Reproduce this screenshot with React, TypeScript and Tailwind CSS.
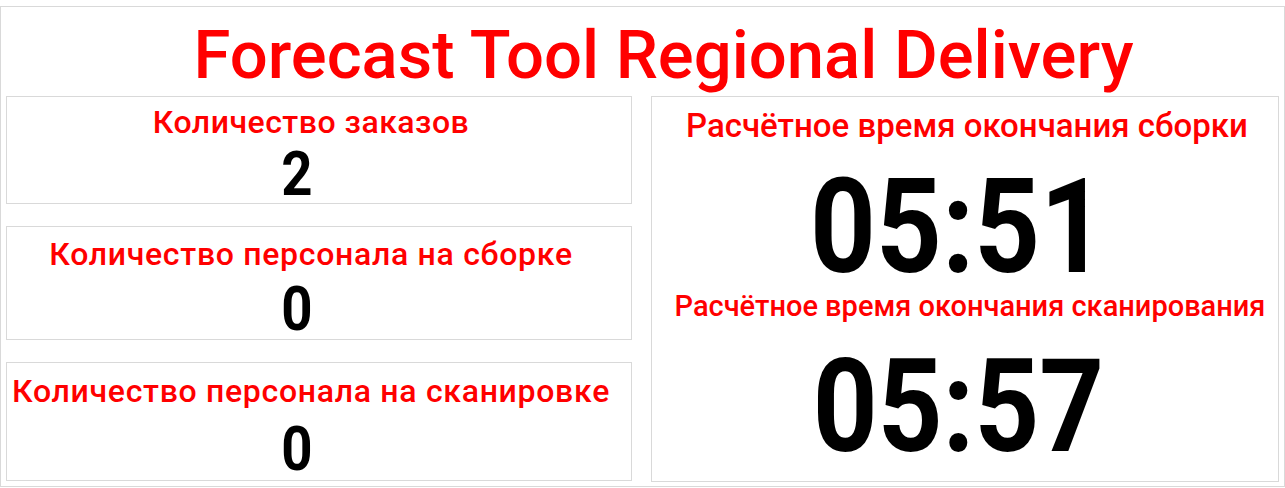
import React from "react";

const F = { fontFamily: "Roboto, 'Liberation Sans', sans-serif" };

export default function App() {
  return (
    <div className="w-[1285px] h-[488px] bg-white overflow-hidden" style={F}>
      <div className="mt-[6px] h-[481px] border border-[#d9d9d9] flex flex-col px-[5px]">
        <div className="h-[89px] pt-[14px] pl-[42px] text-center text-[67px] leading-[68px] font-medium text-[#ff0000] whitespace-nowrap">
          Forecast Tool Regional Delivery
        </div>
        <div className="flex gap-[19px]">
          <div className="w-[626px] flex flex-col gap-[22px]">
            <div className="h-[108px] border border-[#d9d9d9] flex flex-col items-center pt-[9px] pr-[16px]">
              <div className="text-[32px] leading-[32px] font-medium tracking-[0.5px] text-[#ff0000] whitespace-nowrap">Количество заказов</div>
              <div className="mt-[5px] mr-[28px] text-[62px] leading-[62px] font-bold text-black scale-x-[0.88]">2</div>
            </div>
            <div className="h-[114px] border border-[#d9d9d9] flex flex-col items-center pt-[11px] pr-[16px]">
              <div className="text-[32px] leading-[32px] font-medium tracking-[0.7px] text-[#ff0000] whitespace-nowrap">Количество персонала на сборке</div>
              <div className="mt-[8px] mr-[28px] text-[62px] leading-[62px] font-bold text-black scale-x-[0.88]">0</div>
            </div>
            <div className="h-[119px] border border-[#d9d9d9] flex flex-col items-center pt-[12px] pr-[16px]">
              <div className="text-[32px] leading-[32px] font-medium tracking-[0.7px] text-[#ff0000] whitespace-nowrap">Количество персонала на сканировке</div>
              <div className="mt-[11px] mr-[28px] text-[62px] leading-[62px] font-bold text-black scale-x-[0.88]">0</div>
            </div>
          </div>
          <div className="w-[628px] h-[386px] border border-[#d9d9d9] flex flex-col items-center pt-[12px]">
            <div className="ml-[4px] text-[33px] leading-[33px] font-medium text-[#ff0000] whitespace-nowrap">Расчётное время окончания сборки</div>
            <div className="mt-[30px] mr-[14px] text-[132px] leading-[110px] font-bold text-black tabular-nums scale-x-[0.87]">05:51</div>
            <div className="mt-[10px] ml-[10px] text-[29px] leading-[29px] font-medium text-[#ff0000] whitespace-nowrap">Расчётное время окончания сканирования</div>
            <div className="mt-[31px] mr-[14px] text-[130px] leading-[110px] font-bold text-black tabular-nums scale-x-[0.87]">05:57</div>
          </div>
        </div>
      </div>
    </div>
  );
}
